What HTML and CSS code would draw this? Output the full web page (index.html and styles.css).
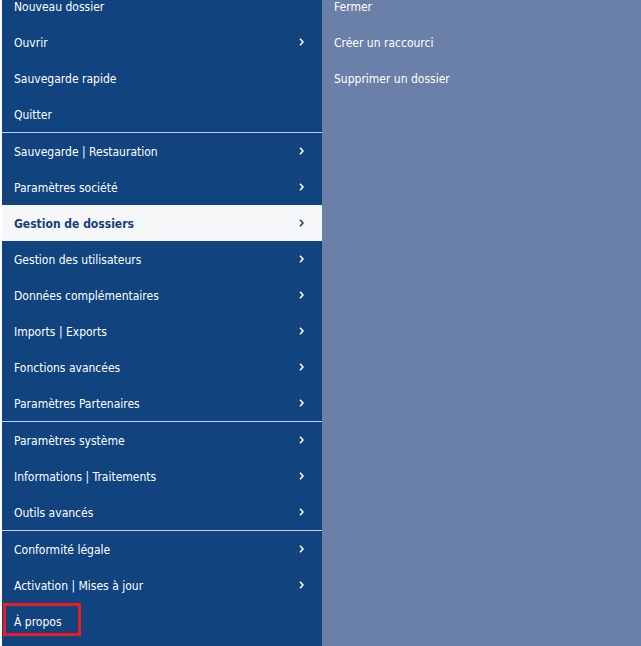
FILE: index.html
```html
<!DOCTYPE html>
<html lang="fr">
<head>
<meta charset="utf-8">
<title>Menu</title>
<link rel="stylesheet" href="styles.css">
</head>
<body>
<div class="app">
  <nav class="menu">
    <ul class="list first">
      <li class="item"><span>Nouveau dossier</span></li>
      <li class="item"><span>Ouvrir</span><svg class="chev" viewBox="0 0 5 8"><path d="M1 0.8 L4 4 L1 7.2"/></svg></li>
      <li class="item"><span>Sauvegarde rapide</span></li>
      <li class="item"><span>Quitter</span></li>
    </ul>
    <ul class="list">
      <li class="item"><span>Sauvegarde | Restauration</span><svg class="chev" viewBox="0 0 5 8"><path d="M1 0.8 L4 4 L1 7.2"/></svg></li>
      <li class="item"><span>Paramètres société</span><svg class="chev" viewBox="0 0 5 8"><path d="M1 0.8 L4 4 L1 7.2"/></svg></li>
      <li class="item active"><span>Gestion de dossiers</span><svg class="chev" viewBox="0 0 5 8"><path d="M1 0.8 L4 4 L1 7.2"/></svg></li>
      <li class="item"><span>Gestion des utilisateurs</span><svg class="chev" viewBox="0 0 5 8"><path d="M1 0.8 L4 4 L1 7.2"/></svg></li>
      <li class="item"><span>Données complémentaires</span><svg class="chev" viewBox="0 0 5 8"><path d="M1 0.8 L4 4 L1 7.2"/></svg></li>
      <li class="item"><span>Imports | Exports</span><svg class="chev" viewBox="0 0 5 8"><path d="M1 0.8 L4 4 L1 7.2"/></svg></li>
      <li class="item"><span>Fonctions avancées</span><svg class="chev" viewBox="0 0 5 8"><path d="M1 0.8 L4 4 L1 7.2"/></svg></li>
      <li class="item"><span>Paramètres Partenaires</span><svg class="chev" viewBox="0 0 5 8"><path d="M1 0.8 L4 4 L1 7.2"/></svg></li>
    </ul>
    <ul class="list">
      <li class="item"><span>Paramètres système</span><svg class="chev" viewBox="0 0 5 8"><path d="M1 0.8 L4 4 L1 7.2"/></svg></li>
      <li class="item"><span>Informations | Traitements</span><svg class="chev" viewBox="0 0 5 8"><path d="M1 0.8 L4 4 L1 7.2"/></svg></li>
      <li class="item"><span>Outils avancés</span><svg class="chev" viewBox="0 0 5 8"><path d="M1 0.8 L4 4 L1 7.2"/></svg></li>
    </ul>
    <ul class="list">
      <li class="item"><span>Conformité légale</span><svg class="chev" viewBox="0 0 5 8"><path d="M1 0.8 L4 4 L1 7.2"/></svg></li>
      <li class="item"><span>Activation | Mises à jour</span><svg class="chev" viewBox="0 0 5 8"><path d="M1 0.8 L4 4 L1 7.2"/></svg></li>
      <li class="item marked"><span>À propos</span></li>
    </ul>
  </nav>
  <section class="submenu">
    <ul class="list first">
      <li class="item"><span>Fermer</span></li>
      <li class="item"><span>Créer un raccourci</span></li>
      <li class="item"><span>Supprimer un dossier</span></li>
    </ul>
  </section>
</div>
</body>
</html>
```
FILE: styles.css
```css
html, body {
  margin: 0;
  padding: 0;
  background: #ffffff;
}
body {
  font-family: "DejaVu Sans Condensed", "DejaVu Sans", sans-serif;
  font-size: 12px;
  color: #ffffff;
}
.app {
  display: flex;
  height: 646px;
  overflow: hidden;
}
.menu {
  width: 320px;
  margin-left: 2px;
  background: #11437f;
  display: flex;
  flex-direction: column;
}
.list {
  list-style: none;
  margin: 0;
  padding: 0;
}
.list + .list {
  border-top: 1px solid #c3cddd;
}
.list.first {
  margin-top: -12px;
}
.item {
  height: 36px;
  display: flex;
  align-items: center;
  justify-content: space-between;
  padding: 0 18px 0 12px;
  box-sizing: border-box;
}
.item span {
  line-height: 16px;
  padding-top: 2px;
}
.chev {
  width: 5px;
  height: 8px;
  fill: none;
  stroke: #ffffff;
  stroke-width: 1.6;
}
.item.active {
  background: #f4f6f8;
  color: #15407a;
  font-weight: bold;
}
.item.active .chev {
  stroke: #15407a;
}
.item.marked {
  padding: 0;
  align-items: flex-start;
}
.item.marked span {
  margin: 0 0 0 1px;
  width: 78px;
  height: 33px;
  box-sizing: border-box;
  border: 3px solid #ec1c24;
  padding: 2px 0 0 8px;
  line-height: 28px;
}
.submenu {
  flex: 1;
  background: #6a80a8;
}
.submenu .item {
  padding-left: 12px;
}
```
